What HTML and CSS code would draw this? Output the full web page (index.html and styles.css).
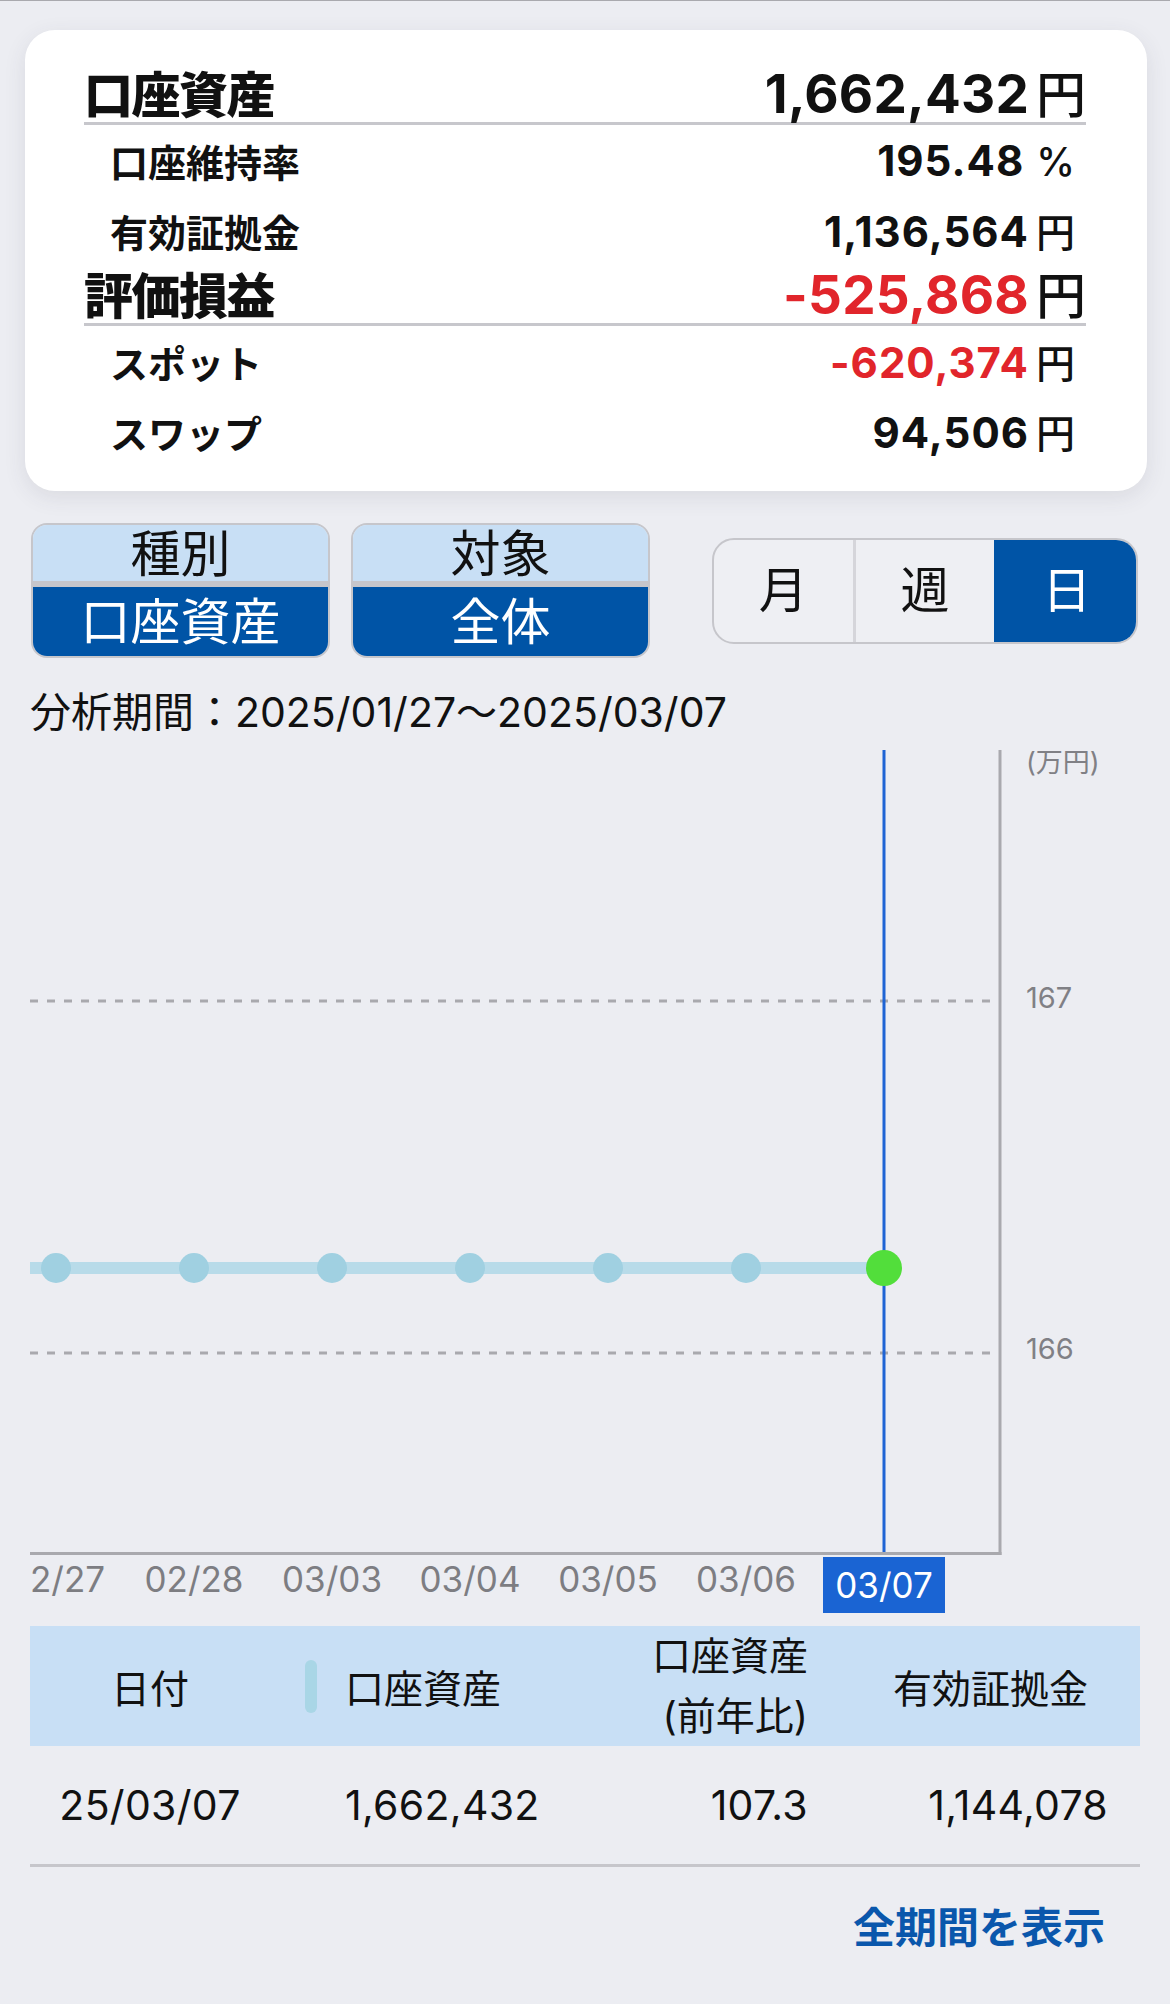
FILE: index.html
```html
<!DOCTYPE html>
<html lang="ja">
<head>
<meta charset="utf-8">
<title>口座資産</title>
<link rel="stylesheet" href="styles.css">
</head>
<body>
<div class="page">
  <section class="summary">
    <div class="row major">
      <span class="label">口座資産</span>
      <span class="value">1,662,432<span class="unit">円</span></span>
    </div>
    <div class="row minor">
      <span class="label">口座維持率</span>
      <span class="value">195.48<span class="unit pct">%</span></span>
    </div>
    <div class="row minor">
      <span class="label">有効証拠金</span>
      <span class="value">1,136,564<span class="unit">円</span></span>
    </div>
    <div class="row major">
      <span class="label">評価損益</span>
      <span class="value"><span class="neg">-525,868</span><span class="unit">円</span></span>
    </div>
    <div class="row minor">
      <span class="label">スポット</span>
      <span class="value"><span class="neg">-620,374</span><span class="unit">円</span></span>
    </div>
    <div class="row minor">
      <span class="label">スワップ</span>
      <span class="value">94,506<span class="unit">円</span></span>
    </div>
  </section>

  <div class="controls">
    <div class="pickers">
      <div class="picker">
        <div class="picker-title">種別</div>
        <div class="picker-value">口座資産</div>
      </div>
      <div class="picker">
        <div class="picker-title">対象</div>
        <div class="picker-value">全体</div>
      </div>
    </div>
    <div class="segmented">
      <div class="seg">月</div>
      <div class="seg">週</div>
      <div class="seg active">日</div>
    </div>
  </div>

  <div class="period">分析期間：2025/01/27～2025/03/07</div>

  <div class="chart">
    <svg class="plot" width="972" height="805" viewBox="0 0 972 805">
      <line class="grid" x1="0" y1="251" x2="962" y2="251"/>
      <line class="grid" x1="0" y1="603" x2="962" y2="603"/>
      <line class="axis" x1="970" y1="0" x2="970" y2="805"/>
      <line class="axis" x1="0" y1="803.5" x2="971.5" y2="803.5"/>
      <line class="series" x1="0" y1="518" x2="854" y2="518"/>
      <line class="cursor" x1="854" y1="0" x2="854" y2="802"/>
      <circle class="dot" cx="26" cy="518" r="15"/>
      <circle class="dot" cx="164" cy="518" r="15"/>
      <circle class="dot" cx="302" cy="518" r="15"/>
      <circle class="dot" cx="440" cy="518" r="15"/>
      <circle class="dot" cx="578" cy="518" r="15"/>
      <circle class="dot" cx="716" cy="518" r="15"/>
      <circle class="dot-active" cx="854" cy="518" r="18"/>
    </svg>
    <div class="yaxis">
      <span class="ylabel ylabel-unit">(万円)</span>
      <span class="ylabel ylabel-167">167</span>
      <span class="ylabel ylabel-166">166</span>
    </div>
  </div>

  <div class="xaxis">
    <div class="tick tick-first">2/27</div>
    <div class="tick">02/28</div>
    <div class="tick">03/03</div>
    <div class="tick">03/04</div>
    <div class="tick">03/05</div>
    <div class="tick">03/06</div>
    <div class="tick"><span class="tick-selected">03/07</span></div>
  </div>

  <div class="table">
    <div class="thead">
      <div class="cell c1">日付</div>
      <div class="cell c2"><span class="legend"></span>口座資産</div>
      <div class="cell c3 two-line">口座資産<br>(前年比)</div>
      <div class="cell c4">有効証拠金</div>
    </div>
    <div class="trow">
      <div class="cell c1">25/03/07</div>
      <div class="cell c2">1,662,432</div>
      <div class="cell c3">107.3</div>
      <div class="cell c4">1,144,078</div>
    </div>
  </div>

  <div class="more">全期間を表示</div>
</div>
</body>
</html>
```

FILE: styles.css
```css
* {
  box-sizing: border-box;
}

html, body {
  margin: 0;
  padding: 0;
}

body {
  background: #ecedf2;
  font-family: Inter, "Noto Sans CJK JP", sans-serif;
  color: #111;
  border-top: 1px solid #a9a9ae;
  min-height: 2004px;
}

.page {
  padding: 0 30px;
}

/* summary card */
.summary {
  margin: 29px -7px 0 -5px;
  padding: 34px 61px 25px 59px;
  background: #fff;
  border-radius: 30px;
  box-shadow: 0 6px 22px rgba(60, 60, 80, 0.10);
}

.row {
  display: flex;
  justify-content: space-between;
  align-items: center;
}

.row.major {
  height: 61px;
  padding-bottom: 4px;
  border-bottom: 3px solid #c7c7cc;
}

.row.minor {
  height: 70px;
  padding: 0 11px 0 26px;
}

.row.major .label {
  font-size: 49px;
  font-weight: 900;
  letter-spacing: -1.5px;
}

.row.major .value {
  font-size: 53px;
  font-weight: 700;
  letter-spacing: 0.2px;
}

.row.minor .label {
  font-size: 38px;
  font-weight: 700;
}

.row.minor .value {
  font-size: 42px;
  font-weight: 700;
  letter-spacing: 1px;
}

.unit {
  margin-left: 7px;
  font-weight: 500;
  letter-spacing: 0;
}

.row.major .unit {
  font-size: 50px;
}

.row.minor .unit {
  font-size: 39px;
}

.unit.pct {
  margin-left: 12px;
}

.neg {
  color: #e1252b;
}

/* controls */
.controls {
  margin-top: 32px;
  display: flex;
  justify-content: space-between;
  align-items: center;
}

.pickers {
  display: flex;
  gap: 21px;
  margin-left: 1px;
}

.picker {
  width: 299px;
  height: 135px;
  border: 2px solid #c6c6cb;
  border-radius: 16px;
  overflow: hidden;
  display: flex;
  flex-direction: column;
}

.picker-title {
  height: 62px;
  background: #c8dff5;
  border-bottom: 6px solid #c6c6cb;
  font-size: 50px;
  line-height: 58px;
  text-align: center;
  color: #111;
}

.picker-value {
  flex: 1;
  background: #0054a6;
  color: #fff;
  font-size: 50px;
  line-height: 62px;
  padding-top: 4px;
  text-align: center;
}

.segmented {
  width: 426px;
  height: 106px;
  margin-right: 2px;
  border: 2px solid #c6c6cb;
  border-radius: 22px;
  overflow: hidden;
  display: flex;
  background: #eeeff3;
}

.seg {
  flex: 1;
  display: flex;
  align-items: center;
  justify-content: center;
  padding-bottom: 8px;
  font-size: 49px;
  color: #111;
}

.seg + .seg {
  border-left: 3px solid #d5d5da;
}

.seg.active {
  background: #0054a6;
  color: #fff;
  border-left-color: #0054a6;
}

/* period */
.period {
  margin-top: 32px;
  height: 44px;
  line-height: 44px;
  font-size: 41px;
  color: #111;
}

/* chart */
.chart {
  margin-top: 16px;
  display: flex;
}

.plot {
  display: block;
  flex: none;
}

.grid {
  stroke: #a9a9ae;
  stroke-width: 3;
  stroke-dasharray: 8 9;
}

.axis {
  stroke: #a9a9ae;
  stroke-width: 3;
}

.series {
  stroke: #b8dbe9;
  stroke-width: 12;
}

.cursor {
  stroke: #1f64d4;
  stroke-width: 3;
}

.dot {
  fill: #a0d0e1;
}

.dot-active {
  fill: #52de3b;
}

.yaxis {
  position: relative;
  flex: 1;
}

.ylabel {
  position: absolute;
  left: 24px;
  font-size: 29px;
  line-height: 36px;
  color: #808085;
  white-space: nowrap;
}

.ylabel-unit {
  top: -5px;
  font-size: 27px;
}

.ylabel-167 {
  top: 230px;
}

.ylabel-166 {
  top: 581px;
}

/* x axis */
.xaxis {
  margin-top: 2px;
  height: 56px;
  display: flex;
}

.tick {
  flex: none;
  width: 138px;
  height: 56px;
  display: flex;
  align-items: flex-start;
  justify-content: center;
  font-size: 35px;
  line-height: 44px;
  color: #7d7d82;
}

.tick-first {
  width: 95px;
  justify-content: flex-start;
}

.tick-selected {
  width: 122px;
  height: 56px;
  display: flex;
  align-items: center;
  justify-content: center;
  background: #1a64d3;
  color: #fff;
}

/* table */
.table {
  margin-top: 13px;
}

.thead,
.trow {
  display: grid;
  grid-template-columns: 240px 300px 270px 300px;
  align-items: center;
  font-size: 39px;
  color: #111;
}

.thead {
  height: 120px;
  background: #c8dff5;
}

.trow {
  height: 121px;
  border-bottom: 3px solid #c6c6cb;
  font-size: 41px;
  letter-spacing: 0.3px;
}

.cell.c1 {
  text-align: center;
}

.cell.c2 {
  display: flex;
  align-items: center;
}

.thead .c2 {
  padding-left: 35px;
}

.trow .c2 {
  padding-left: 75px;
}

.legend {
  width: 12px;
  height: 53px;
  border-radius: 6px;
  background: #a9d6e6;
  margin-right: 28px;
}

.cell.c3 {
  text-align: right;
  padding-right: 32px;
}

.two-line {
  line-height: 60px;
}

.cell.c4 {
  text-align: right;
}

.thead .c4 {
  padding-right: 52px;
}

.trow .c4 {
  padding-right: 32px;
}

/* link */
.more {
  margin-top: 36px;
  padding-right: 35px;
  text-align: right;
  font-size: 42px;
  line-height: 50px;
  font-weight: 700;
  color: #0a57ac;
}
```
